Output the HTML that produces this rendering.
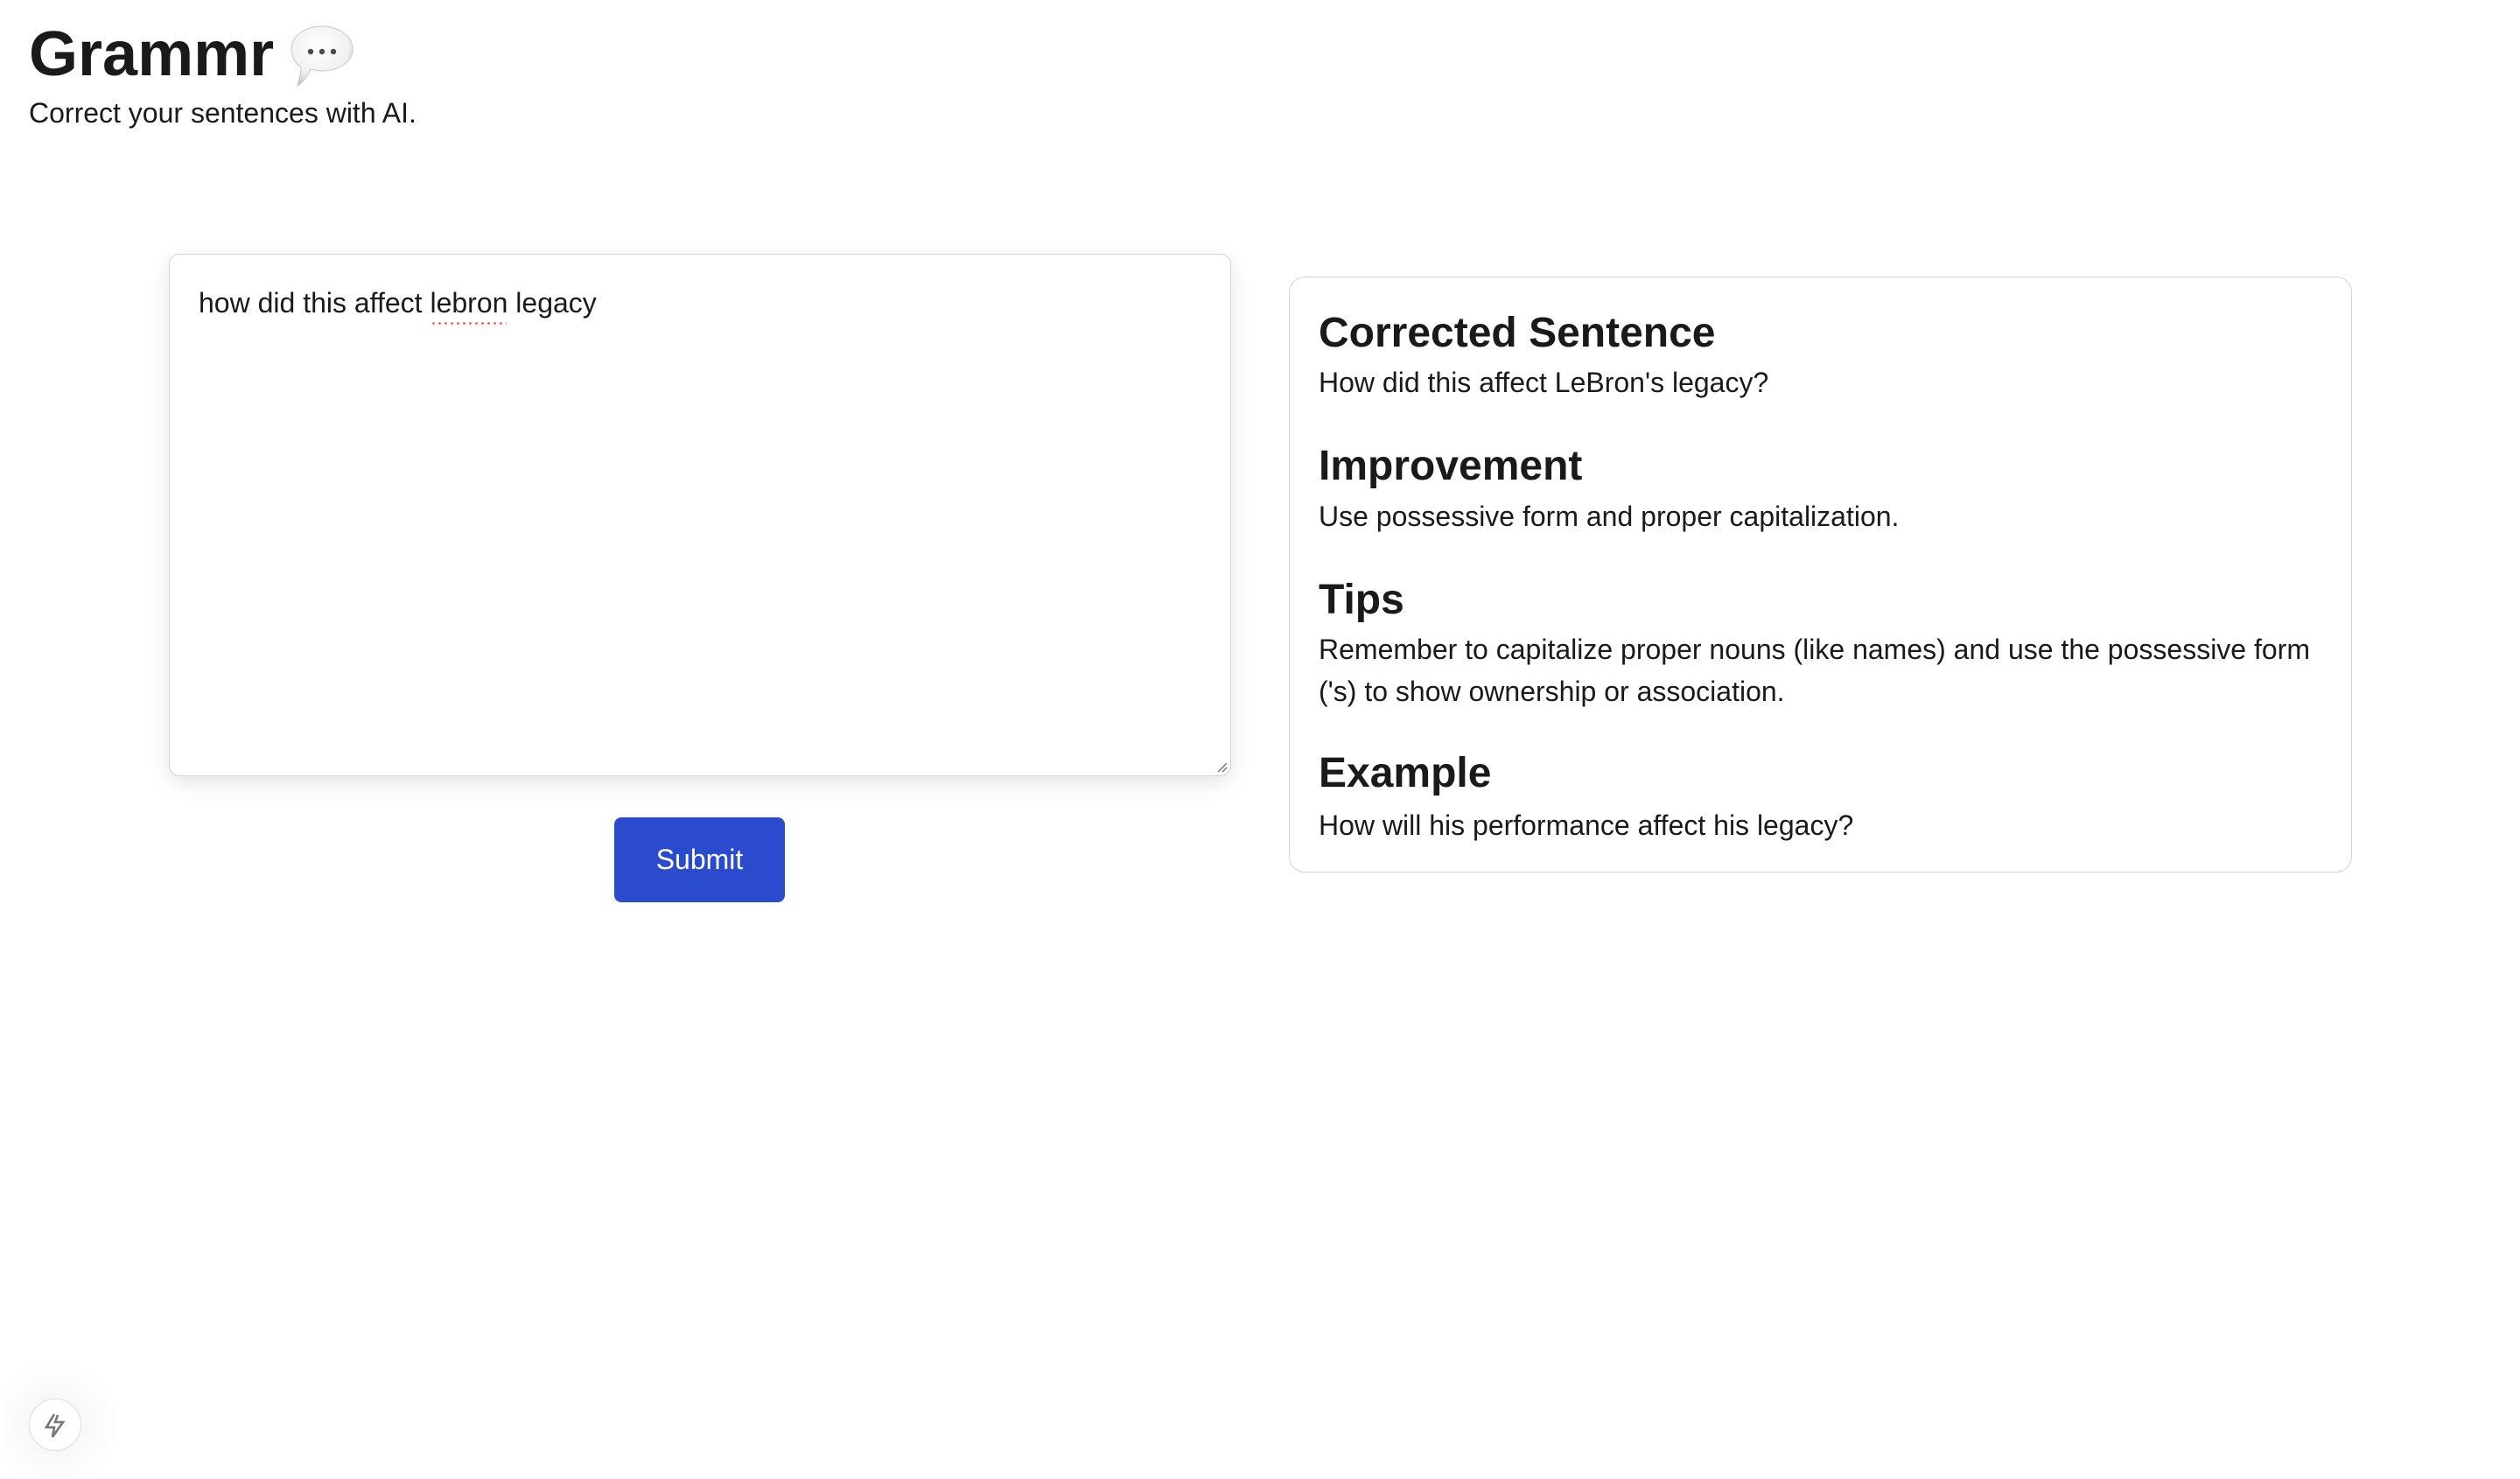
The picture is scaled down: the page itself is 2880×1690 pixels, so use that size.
<!DOCTYPE html>
<html><head><meta charset="utf-8">
<style>
html,body{margin:0;padding:0;background:#fff;width:2880px;height:1690px;overflow:hidden;font-family:"Liberation Sans",Arial,sans-serif;color:#1a1a1a;position:relative}
.title{position:absolute;left:33px;top:17px;font-size:72px;font-weight:bold;line-height:90px;margin:0}
.sub{position:absolute;left:33px;top:109px;font-size:32px;line-height:40px}
.ta{position:absolute;left:193px;top:290px;width:1212px;height:595px;border:1.5px solid #d4d4d8;border-radius:12px;box-shadow:0 8px 24px rgba(0,0,0,0.10);background:#fff}
.ta .t{position:absolute;left:33px;top:33px;font-size:32px;line-height:45px;color:#1a1a1a;white-space:nowrap}
.sq{position:relative}
.sq:after{content:"";position:absolute;left:1px;right:1px;top:40px;height:3px;background:radial-gradient(circle,#f07060 1.3px,transparent 1.6px) 0 0/7px 3px repeat-x}
.btn{position:absolute;left:702px;top:934px;width:195px;height:97px;background:#2b4bcf;border-radius:8px;color:#fff;font-size:32px;line-height:97px;text-align:center}
.panel{position:absolute;left:1473px;top:316px;width:1213px;height:679px;border:1.5px solid #d4d4d8;border-radius:18px;background:#fff}
.in{position:absolute;left:33px;top:36px;width:1160px}
h2{margin:0;font-size:48px;line-height:56px;font-weight:bold}
p{margin:0;font-size:32px;line-height:48px}
.fab{position:absolute;left:33px;top:1598px;width:58px;height:58px;border-radius:50%;background:#fff;border:1px solid #ddd;box-shadow:0 0 40px 20px rgba(0,0,0,0.04)}
</style></head><body>
<div class="title">Grammr</div>
<svg style="position:absolute;left:330px;top:26px" width="76" height="76" viewBox="0 0 76 76">
<defs><radialGradient id="g" cx="0.45" cy="0.35" r="0.7"><stop offset="0" stop-color="#ffffff"/><stop offset="0.7" stop-color="#f0f0f0"/><stop offset="1" stop-color="#bdbdbd"/></radialGradient></defs>
<path d="M38 4 C57 4 73 15 73 30 C73 45 57 55 38 55 C33 55 29 54 25 53 C21 62 16 68 10 72 C12 65 14 58 14 51 C7 46 3 38 3 30 C3 15 19 4 38 4 Z" fill="url(#g)" stroke="#c8c8c8" stroke-width="1"/>
<circle cx="25" cy="33" r="3.2" fill="#4a4a4a"/><circle cx="38" cy="33" r="3.2" fill="#4a4a4a"/><circle cx="51" cy="33" r="3.2" fill="#4a4a4a"/>
</svg>
<div class="sub">Correct your sentences with AI.</div>

<div class="ta"><div class="t">how did this affect <span class="sq">lebron</span> legacy</div>
<svg style="position:absolute;right:3px;bottom:3px" width="14" height="14" viewBox="0 0 14 14"><path d="M13 3 L3 13 M13 8 L8 13" stroke="#777" stroke-width="1.5"/></svg>
</div>
<div class="btn">Submit</div>

<div class="panel"><div class="in">
<h2>Corrected Sentence</h2>
<p style="margin-top:4px">How did this affect LeBron's legacy?</p>
<h2 style="margin-top:44px">Improvement</h2>
<p style="margin-top:5px">Use possessive form and proper capitalization.</p>
<h2 style="margin-top:44px">Tips</h2>
<p style="margin-top:4px">Remember to capitalize proper nouns (like names) and use the possessive form ('s) to show ownership or association.</p>
<h2 style="margin-top:42px">Example</h2>
<p style="margin-top:7px">How will his performance affect his legacy?</p>
</div></div>

<div class="fab"><svg style="position:absolute;left:16px;top:15px" width="26" height="30" viewBox="0 0 26 30"><path d="M12 2 L3 17 L12 17 L10 28 L22 11 L13 11 L16 3" fill="none" stroke="#777" stroke-width="2.6" stroke-linejoin="miter"/></svg></div>
</body></html>
